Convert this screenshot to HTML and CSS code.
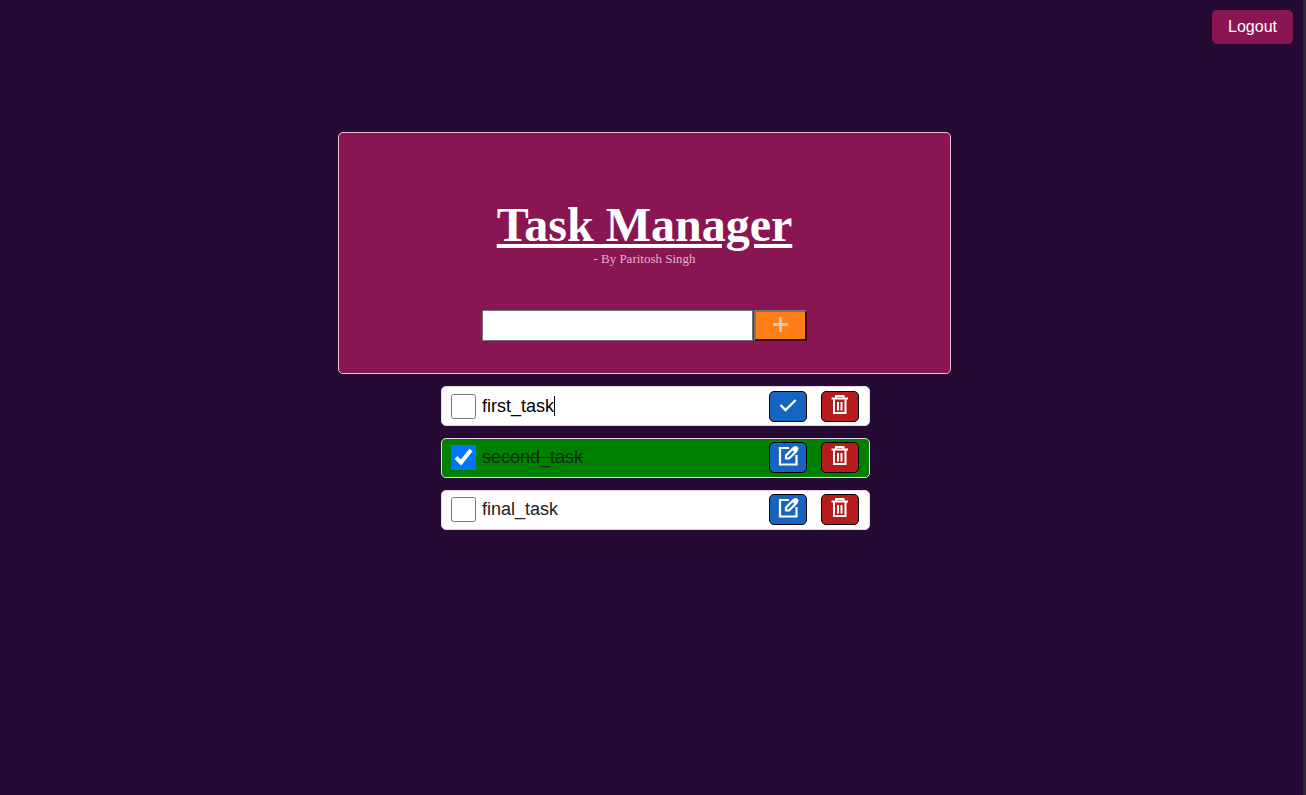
FILE: index.html
```html
<!DOCTYPE html>
<html lang="en">
<head>
<meta charset="utf-8">
<meta name="viewport" content="width=device-width, initial-scale=1">
<title>Task Manager</title>
<link rel="stylesheet" href="styles.css">
</head>
<body>
<svg class="sprite" aria-hidden="true">
  <symbol id="trash" viewBox="0 0 22 22"><path d="M2.500 4.500h16.500M7 3.500V2h7.500v1.500M5 5v14h11.500V5M9 8v8.500M12.500 8v8.500" fill="none" stroke="currentColor" stroke-width="2"/></symbol>
  <symbol id="edit" viewBox="0 0 22 22"><path d="M12 3H3v16.500h16.500V10" fill="none" stroke="currentColor" stroke-width="2.200"/><path d="M9 13.500v-3l7.500-7.500 3 3-7.500 7.500z" fill="none" stroke="currentColor" stroke-width="2.200" stroke-linejoin="round"/><path d="M14.500 4l2.500-2.500q1.500-1.300 3.500.3t.3 3.500L18 8z" fill="currentColor"/></symbol>
  <symbol id="check" viewBox="0 0 22 22"><path d="M3.500 11l5 5L18.700 6" fill="none" stroke="currentColor" stroke-width="2.400"/></symbol>
  <symbol id="plus" viewBox="0 0 20 20"><path d="M9.500 2v15M2 9.500h15" fill="none" stroke="currentColor" stroke-width="2.800"/></symbol>
</svg>
<header class="topbar"><button class="logout" type="button">Logout</button></header>
<main class="page">
  <section class="panel">
    <h1 class="title">Task Manager</h1>
    <p class="byline">- By Paritosh Singh</p>
    <form class="add-form">
      <input class="new-task" type="text" aria-label="New task">
      <button class="add" type="button" aria-label="Add task"><svg class="icon-plus"><use href="#plus"/></svg></button>
    </form>
  </section>
  <ul class="tasks">
    <li class="task active">
      <input class="tick" type="checkbox" aria-label="first_task done">
      <span class="editing"><input class="name" type="text" value="first_task" aria-label="Task name"></span>
      <button class="action save" type="button" aria-label="Save"><svg class="icon"><use href="#check"/></svg></button>
      <button class="action delete" type="button" aria-label="Delete"><svg class="icon"><use href="#trash"/></svg></button>
    </li>
    <li class="task done">
      <input class="tick" type="checkbox" id="t2" checked>
      <label class="label" for="t2">second_task</label>
      <button class="action save" type="button" aria-label="Edit"><svg class="icon"><use href="#edit"/></svg></button>
      <button class="action delete" type="button" aria-label="Delete"><svg class="icon"><use href="#trash"/></svg></button>
    </li>
    <li class="task">
      <input class="tick" type="checkbox" id="t3">
      <label class="label" for="t3">final_task</label>
      <button class="action save" type="button" aria-label="Edit"><svg class="icon"><use href="#edit"/></svg></button>
      <button class="action delete" type="button" aria-label="Delete"><svg class="icon"><use href="#trash"/></svg></button>
    </li>
  </ul>
</main>
</body>
</html>
```
FILE: styles.css
```css
* { box-sizing: border-box; }
body {
  margin: 0;
  min-height: 100vh;
  background: #250a33;
  border-right: 3px solid #2b2b2f;
  font-family: "Liberation Sans", Arial, sans-serif;
}
.sprite { display: none; }
.topbar { display: flex; justify-content: flex-end; padding: 10px 10px 0; }
.logout {
  height: 34px;
  padding: 0 16px;
  border: 0;
  border-radius: 5px;
  background: #891652;
  color: #fff;
  font: 16px "Liberation Sans", Arial, sans-serif;
}
.page {
  display: flex;
  flex-direction: column;
  align-items: center;
  padding: 88px 14px 24px 0;
}
.panel {
  display: flex;
  flex-direction: column;
  align-items: center;
  width: 100%;
  max-width: 613px;
  padding: 65px 16px 32px;
  border: 1px solid #eabfd4;
  border-radius: 5px;
  background: #891652;
}
.title {
  margin: 0;
  color: #fff;
  font: bold 48px/54px "Liberation Serif", "Times New Roman", serif;
  text-decoration: underline;
}
.byline {
  margin: 0 0 44px;
  color: #e3b3cc;
  font: 13px/14px "Liberation Serif", "Times New Roman", serif;
}
.add-form { display: flex; gap: 1px; width: 100%; max-width: 325px; height: 31px; }
.new-task {
  flex: 1;
  min-width: 0;
  border: 1px solid #767676;
  background: #fff;
  font-size: 16px;
}
.add {
  display: flex;
  align-items: center;
  justify-content: center;
  width: 53px;
  padding: 0 0 2px;
  border: 2px solid;
  border-color: #767676 #3a0d12 #3a0d12 #767676;
  background: #ff7f17;
  color: #d6cdbf;
}
.tasks {
  display: flex;
  flex-direction: column;
  gap: 12px;
  width: 100%;
  max-width: 451px;
  margin: 12px 0 0;
  padding: 0 0 0 22px;
  list-style: none;
}
.task {
  display: flex;
  align-items: center;
  height: 40px;
  padding: 0 10px 2px 9px;
  border: 1px solid #e8d5e8;
  border-radius: 5px;
  background: #fff;
  color: #212121;
  font-size: 18px;
}
.active { padding-bottom: 0; }
.done { background: #008000; color: #10300f; }
.done .label { text-decoration: line-through; }
.tick { width: 25px; height: 25px; margin: 0 6px 0 0; }
.label { flex: 1; }
.editing { display: flex; flex: 1; align-items: center; min-width: 0; }
.editing::after { content: ""; width: 1px; height: 20px; background: #000; }
.name {
  field-sizing: content;
  padding: 0;
  border: 0;
  outline: 0;
  background: none;
  color: #000;
  font: 18px "Liberation Sans", Arial, sans-serif;
}
.action {
  display: flex;
  align-items: center;
  justify-content: center;
  width: 38px;
  height: 31px;
  padding: 0 0 3px;
  border: 1px solid #000;
  border-radius: 5px;
  color: #fff;
}
.save { background: #1565c0; }
.delete { margin-left: 14px; background: #b71c1c; }
.icon { width: 22px; height: 22px; }
.icon-plus { width: 20px; height: 20px; }
```
